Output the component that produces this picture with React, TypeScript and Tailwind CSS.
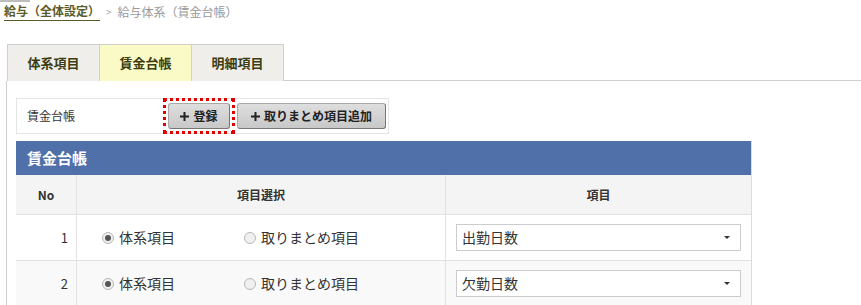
const font = { fontFamily: '"Noto Sans CJK JP", "Noto Sans", sans-serif' };

function Radio({ checked }: { checked: boolean }) {
  return (
    <span className="inline-flex h-[12px] w-[12px] items-center justify-center rounded-full border border-[#b8b8b8] bg-[#f0f0f0]">
      {checked && <span className="h-[6px] w-[6px] rounded-full bg-[#555]" />}
    </span>
  );
}

function Row({ no, item, shade }: { no: number; item: string; shade: boolean }) {
  return (
    <div className={`grid h-[46px] grid-cols-[61px_369px_305px] border-t border-[#e2e2e2] ${shade ? "bg-[#f9f9f9]" : "bg-white"}`}>
      <div className="flex items-center justify-end border-r border-[#e2e2e2] pr-[8px] text-[13px] text-[#333]">{no}</div>
      <div className="flex items-center border-r border-[#e2e2e2] pl-[25px] text-[14px] text-[#333]">
        <label className="flex w-[142px] items-center gap-[5px]">
          <Radio checked />
          <span>体系項目</span>
        </label>
        <label className="flex items-center gap-[5px]">
          <Radio checked={false} />
          <span>取りまとめ項目</span>
        </label>
      </div>
      <div className="flex items-center pl-[10px]">
        <div className="flex h-[27px] w-[285px] items-center justify-between border border-[#cccccc] bg-white pl-[5px] pr-[10px] text-[14px] text-[#333]">
          <span>{item}</span>
          <span className="h-0 w-0 border-x-[3px] border-t-[3px] border-x-transparent border-t-[#333]" />
        </div>
      </div>
    </div>
  );
}

function Plus() {
  return (
    <svg width="9" height="9" viewBox="0 0 9 9" className="shrink-0">
      <path d="M3.5 0h2v3.5H9v2H5.5V9h-2V5.5H0v-2h3.5z" fill="#222" />
    </svg>
  );
}

export default function App() {
  return (
    <div className="relative h-[305px] w-[861px] overflow-hidden bg-white" style={font}>
      <div className="absolute left-0 top-0 h-[2px] w-[30px] bg-[#bdbdbd]" />
      {/* breadcrumb */}
      <div className="flex items-center gap-[6px] pl-[4px] pt-[2px] text-[12px] leading-[18px]">
        <span className="border-b border-[#5b5b2a] font-bold text-[#5b5b2a]">給与（全体設定）</span>
        <span className="text-[10px] text-[#aaa]">&gt;</span>
        <span className="text-[#999]">給与体系（賃金台帳）</span>
      </div>

      {/* tabs */}
      <div className="mt-[23px] flex pl-[7px]">
        {["体系項目", "賃金台帳", "明細項目"].map((t, i) => (
          <div
            key={t}
            className={`flex h-[37px] w-[93px] items-center justify-center border border-b-0 border-[#d0d0d0] text-[13px] font-bold text-[#3d3d12] ${i > 0 ? "-ml-px" : ""} ${i === 1 ? "bg-[#fafac6]" : "bg-[#efeeea]"}`}
          >
            {t}
          </div>
        ))}
        <div className="flex-1 border-b border-[#d0d0d0]" />
      </div>

      {/* panel */}
      <div className="ml-[6px] border-l border-[#d0d0d0] pl-[9px] pt-[17px]">
        <div className="flex h-[36px] w-[373px] items-center border border-[#e4e4e4] pl-[10px]">
          <span className="w-[136px] text-[12px] text-[#333]">賃金台帳</span>
          <div className="flex h-[36px] items-center outline-dotted outline-[3px] -outline-offset-[3px] outline-[#e00000] px-[5px]">
            <button className="flex h-[26px] w-[62px] items-center justify-center gap-[4px] rounded-[3px] border border-[#a8a8a8] border-b-[#777] border-r-[#777] bg-gradient-to-b from-[#dedede] to-[#c8c8c8] text-[12px] font-bold text-[#222]">
              <Plus />登録
            </button>
          </div>
          <button className="ml-[2px] flex h-[26px] w-[149px] items-center justify-center gap-[4px] rounded-[3px] border border-[#a8a8a8] border-b-[#777] border-r-[#777] bg-gradient-to-b from-[#dedede] to-[#c8c8c8] text-[12px] font-bold text-[#222]">
            <Plus />取りまとめ項目追加
          </button>
        </div>

        <div className="mt-[7px] w-[736px] border-r border-[#dcdcdc]">
          <div className="flex h-[34px] items-center bg-[#4f70a8] pl-[11px] text-[15px] font-bold text-white">賃金台帳</div>
          <div className="grid h-[39px] grid-cols-[61px_369px_305px] bg-[#f4f4f4] text-[12px] font-bold text-[#333]">
            <div className="flex items-center justify-center border-r border-[#e2e2e2]">No</div>
            <div className="flex items-center justify-center border-r border-[#e2e2e2]">項目選択</div>
            <div className="flex items-center justify-center">項目</div>
          </div>
          <Row no={1} item="出勤日数" shade={false} />
          <Row no={2} item="欠勤日数" shade />
        </div>
      </div>
    </div>
  );
}
